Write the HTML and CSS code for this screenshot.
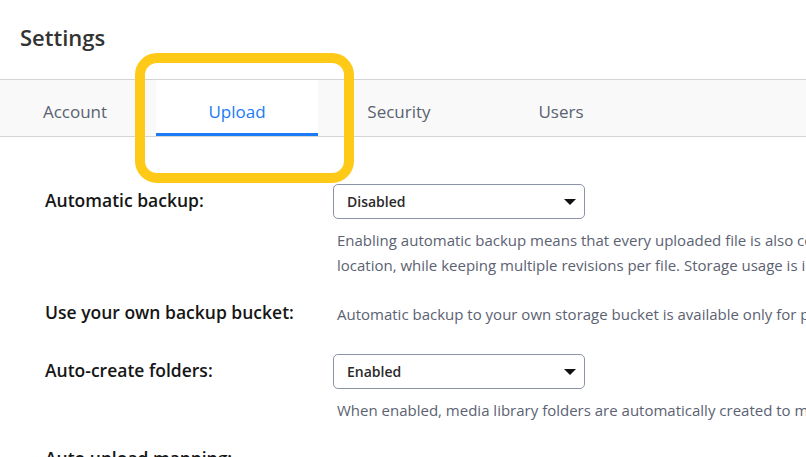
FILE: index.html
```html
<!DOCTYPE html>
<html lang="en">
<head>
    <meta charset="UTF-8">
    <meta name="viewport" content="width=device-width, initial-scale=1.0">
    <title>Settings</title>
    <link rel="stylesheet" href="styles.css">
</head>
<body>
    <div class="page">
        <h1 class="page-title">Settings</h1>

        <nav class="tabs">
            <a href="#" class="tab">Account</a>
            <a href="#" class="tab active">Upload</a>
            <a href="#" class="tab">Security</a>
            <a href="#" class="tab">Users</a>
            <span class="highlight"></span>
        </nav>

        <div class="settings">
            <div class="setting-row">
                <label class="setting-label">Automatic backup:</label>
                <div class="setting-control">
                    <div class="select">
                        <span>Disabled</span>
                        <span class="caret"></span>
                    </div>
                    <p class="setting-desc">Enabling automatic backup means that every uploaded file is also copied to a backup<br>location, while keeping multiple revisions per file. Storage usage is increased accordingly.</p>
                </div>
            </div>

            <div class="setting-row inline">
                <label class="setting-label">Use your own backup bucket:</label>
                <div class="setting-control">
                    <p class="setting-desc">Automatic backup to your own storage bucket is available only for paid plans.</p>
                </div>
            </div>

            <div class="setting-row last">
                <label class="setting-label">Auto-create folders:</label>
                <div class="setting-control">
                    <div class="select">
                        <span>Enabled</span>
                        <span class="caret"></span>
                    </div>
                    <p class="setting-desc">When enabled, media library folders are automatically created to match the upload folder.</p>
                </div>
            </div>

            <div class="setting-row">
                <label class="setting-label">Auto upload mapping:</label>
                <div class="setting-control"></div>
            </div>
        </div>
    </div>
</body>
</html>
```

FILE: styles.css
```css
* {
    margin: 0;
    padding: 0;
    box-sizing: border-box;
    font-family: 'Open Sans', 'Noto Sans', sans-serif;
}

body {
    background-color: #fff;
    overflow: hidden;
}

.page {
    width: 1200px;
}

.page-title {
    font-size: 22px;
    font-weight: 600;
    color: #333;
    padding: 22px 20px 0;
    height: 79px;
}

.tabs {
    position: relative;
    display: flex;
    height: 58px;
    background-color: #f9f9f9;
    border-top: 1px solid #d4d4d4;
    border-bottom: 1px solid #d4d4d4;
    margin-left: -6px;
}

.tab {
    width: 162px;
    display: flex;
    align-items: center;
    justify-content: center;
    padding-top: 7px;
    font-size: 17px;
    color: #5a6270;
    text-decoration: none;
}

.tab.active {
    background-color: #fff;
    color: #1a7bf5;
    border-bottom: 3px solid #1a7bf5;
    padding-top: 10px;
}

.highlight {
    position: absolute;
    left: 141px;
    top: -27px;
    width: 219px;
    height: 130px;
    border: 10px solid #ffc917;
    border-radius: 22px;
}

.settings {
    padding: 47px 0 0 45px;
}

.setting-row {
    display: grid;
    grid-template-columns: 288px 1fr;
    margin-bottom: 22px;
}

.setting-row.inline {
    margin-bottom: 27px;
}

.setting-row.last {
    margin-bottom: 19px;
}

.setting-label {
    font-size: 17.5px;
    font-weight: 600;
    color: #161616;
    padding-top: 4px;
}

.setting-row.inline .setting-label {
    padding-top: 0;
}

.select {
    width: 252px;
    height: 35px;
    border: 1px solid #8a94a6;
    border-radius: 5px;
    display: flex;
    align-items: center;
    justify-content: space-between;
    padding: 0 8px 0 13px;
    font-size: 14px;
    font-weight: 600;
    color: #2a2a2a;
}

.caret {
    width: 0;
    height: 0;
    border-left: 6px solid transparent;
    border-right: 6px solid transparent;
    border-top: 6px solid #111;
}

.setting-desc {
    font-size: 15px;
    line-height: 25px;
    color: #5b6272;
    padding-left: 4px;
    margin-top: 9px;
}

.setting-row.inline .setting-desc {
    margin-top: 2px;
}
```
